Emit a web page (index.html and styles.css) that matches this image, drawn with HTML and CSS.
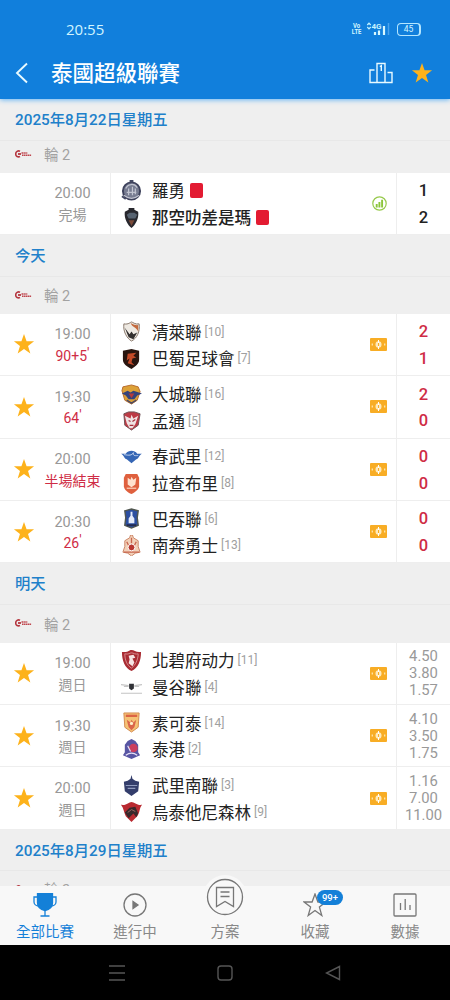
FILE: index.html
```html
<!DOCTYPE html>
<html lang="zh-Hant">
<head>
  <meta charset="UTF-8" />
  <meta name="viewport" content="width=device-width, initial-scale=1.0" />
  <title>泰國超級聯賽</title>
  <link rel="stylesheet" href="styles.css">
</head>
<body>
  <svg class="sprite">
    <symbol id="star" viewBox="0 0 24 24"><path d="M12 1l2.800 8h8.200l-6.600 5.100 2.500 8.300L12 17.400l-6.900 5 2.500-8.300L1 9h8.200z"/></symbol>
    <symbol id="cash" viewBox="0 0 17 13">
      <rect width="17" height="13" rx="1" fill="#f8ad25"/>
      <ellipse cx="8.500" cy="6.500" rx="3" ry="3.300" fill="#ffeabc"/>
      <path d="M8.500 2v9" stroke="#fff" stroke-width="1"/>
      <path d="M8.500 5v3" stroke="#f8ad25" stroke-width="1"/>
      <path d="M2.300 5.500v2M14.700 5.500v2" stroke="#ffe5ac" stroke-width="1.300"/>
    </symbol>
    <symbol id="league" viewBox="0 0 17 8">
      <path d="M5 1.300C3 .3.700 1.500.7 4S3 7.500 5 6.500" fill="none" stroke="#b5363f" stroke-width="1.600"/>
      <path d="M3 4h3" stroke="#b5363f" stroke-width="1.800"/>
      <path d="M6.500 3h6M7 5.200h9.500" stroke="#c0474f" stroke-width="1.500" stroke-dasharray="1.500 .4"/>
    </symbol>
  </svg>

  <div class="header">
    <div class="status">
      <span class="clock">20:55</span>
      <span class="volte">Vo<br>LTE</span>
      <svg class="signal" width="24" height="14" viewBox="0 0 24 14">
        <path d="M1.300 3L3 1.200 4.700 3M1.300 5L3 6.800 4.700 5" fill="none" stroke="#c5f3ff" stroke-width="1.200"/>
        <text x="5.500" y="6.600">4G</text>
        <path d="M9 10v3M13 8.500v4.500M18 4v9" stroke="#d8f8ff" stroke-width="2.200"/>
        <path d="M22.500 1v12" stroke="#4aa2ec" stroke-width="1.500"/>
      </svg>
      <span class="battery">45</span>
    </div>
    <div class="titlebar">
      <svg class="back" width="14" height="22" viewBox="0 0 14 22"><path d="M12 1.500L2 11l10 9.500"/></svg>
      <h1>泰國超級聯賽</h1>
      <svg class="podium" width="24" height="22" viewBox="0 0 24 22"><path d="M8 20.500H1V8h4.500M8 20.500V1.500h8v19zM16 20.500h7V10.500h-4.500M8 20.500h8M10.800 4.500l1.500-.8V9"/></svg>
      <svg class="star" width="22" height="22"><use href="#star"/></svg>
    </div>
  </div>

  <div class="list">
    <h2 class="day">2025年8月22日星期五</h2>
    <div class="round round-first"><svg width="17" height="8"><use href="#league"/></svg>輪 2</div>
    <div class="match">
      <div class="fav"></div>
      <div class="time">20:00<span>完場</span></div>
      <div class="teams">
        <div class="team">
          <svg class="crest" viewBox="0 0 22 22"><circle cx="11" cy="11.500" r="9" fill="#777c91" stroke="#3e425c" stroke-width="2"/><path d="M5 9c2-5 9-6 12-1M6 13h10M8 9v7M12 7v9M15 9v6M3 16c5 4 11 4 16 0" fill="none" stroke="#c1c4d0" stroke-width="1.300"/><path d="M1 17l4 3M9 1h4" stroke="#444963" stroke-width="2"/></svg>
          羅勇<i class="red-card"></i>
        </div>
        <div class="team winner">
          <svg class="crest" viewBox="0 0 22 22"><path d="M8 1h6v2l4 2c1 7-3 14-7 17C7 19 3 12 4 5l4-2z" fill="#27272d"/><path d="M6 8l3-2h5l3 2-2 4H8z" fill="#566270"/><path d="M8 14h6l-3 6z" fill="#7b4a38"/></svg>
          那空叻差是瑪<i class="red-card"></i>
        </div>
      </div>
      <div class="tag"><svg class="stats" width="15" height="15" viewBox="0 0 15 15"><circle cx="7.500" cy="7.500" r="6.700" fill="none" stroke="#96c94a" stroke-width="1.200"/><path d="M4.700 8v3.500M7.400 6v5.500M10.100 3.800v7.700" stroke="#8bc53a" stroke-width="1.900"/></svg></div>
      <div class="score">1<span>2</span></div>
    </div>

    <h2 class="day">今天</h2>
    <div class="round"><svg width="17" height="8"><use href="#league"/></svg>輪 2</div>
    <div class="match live">
      <div class="fav"><svg class="star" width="22" height="22"><use href="#star"/></svg></div>
      <div class="time">19:00<span>90+5<sup>'</sup></span></div>
      <div class="teams">
        <div class="team">
          <svg class="crest" viewBox="0 0 22 22"><path d="M3 3c5 1 7-2 8-2s4 3 8 2c1 8-2 15-8 18C6 18 2 11 3 3z" fill="#eee9e2" stroke="#857568"/><path d="M10 2c4 2 7 3 8 2v7c-2-5-6-4-8-9z" fill="#c36a3e"/><path d="M4 7l5 7 2-3 2 3 4-2-4 7-5-2z" fill="#33302f"/></svg>
          清萊聯<small>[10]</small>
        </div>
        <div class="team">
          <svg class="crest" viewBox="0 0 22 22"><path d="M2 3l9-2 8 2v9c0 5-4 7-8 10-5-3-9-5-9-10z" fill="#29150f"/><path d="M7 6l9-1-3 3 3 2-4 1-1 4 3 3-7-2 2-5-3 2z" fill="#c34a28"/></svg>
          巴蜀足球會<small>[7]</small>
        </div>
      </div>
      <div class="tag"><svg width="17" height="13"><use href="#cash"/></svg></div>
      <div class="score">2<span>1</span></div>
    </div>
    <div class="match live">
      <div class="fav"><svg class="star" width="22" height="22"><use href="#star"/></svg></div>
      <div class="time">19:30<span>64<sup>'</sup></span></div>
      <div class="teams">
        <div class="team">
          <svg class="crest" viewBox="0 0 22 22"><path d="M2 3l9-2 7 2 2 5-3 9-6 4-7-4-3-10z" fill="#dda137" stroke="#b76c30"/><path d="M1 10l6-3 3 2 3-2 9 3-5 2-3 4H8l-3-4z" fill="#35437a"/><path d="M8 10h6l-3 5z" fill="#b63b3b"/><path d="M6 17l5 3 5-3" fill="none" stroke="#4b4a63" stroke-width="1.500"/></svg>
          大城聯<small>[16]</small>
        </div>
        <div class="team">
          <svg class="crest" viewBox="0 0 22 22"><path d="M3 4l5-2h6l6 2-2 12-7 5-7-5z" fill="#bd3b46" stroke="#6d5054"/><path d="M4 6l6 3 1-4 2 4 5-3-3 9-3 4H9l-3-5z" fill="#efe3e3"/><path d="M8 11l2 1M15 10l-3 2M9 16h4" stroke="#a42e3a" stroke-width="1.300"/></svg>
          孟通<small>[5]</small>
        </div>
      </div>
      <div class="tag"><svg width="17" height="13"><use href="#cash"/></svg></div>
      <div class="score">2<span>0</span></div>
    </div>
    <div class="match live">
      <div class="fav"><svg class="star" width="22" height="22"><use href="#star"/></svg></div>
      <div class="time">20:00<span>半場結束</span></div>
      <div class="teams">
        <div class="team">
          <svg class="crest" viewBox="0 0 22 22"><path d="M0 8h5c3-4 9-4 12 0h5c-3 1-3 5-6 6l-5 4-5-4C3 13 3 9 0 8z" fill="#3566b5"/><path d="M3 9c6 1 8 1 10-2-1 4 3 3 5 3" fill="none" stroke="#d2e0f3" stroke-width=".9"/></svg>
          春武里<small>[12]</small>
        </div>
        <div class="team">
          <svg class="crest" viewBox="0 0 22 22"><path d="M5 1h12l2 4v9c0 3-5 7-8 8-4-1-8-5-8-8V5z" fill="#df603e"/><path d="M7 5l3 2 1-3 2 3 3-2-1 7-4 3-4-3z" fill="#ffe1ce"/><path d="M6 16h10" stroke="#f6bda4" stroke-width="1.500"/></svg>
          拉查布里<small>[8]</small>
        </div>
      </div>
      <div class="tag"><svg width="17" height="13"><use href="#cash"/></svg></div>
      <div class="score">0<span>0</span></div>
    </div>
    <div class="match live">
      <div class="fav"><svg class="star" width="22" height="22"><use href="#star"/></svg></div>
      <div class="time">20:30<span>26<sup>'</sup></span></div>
      <div class="teams">
        <div class="team">
          <svg class="crest" viewBox="0 0 22 22"><path d="M4 3l7-2 7 2-1 7 1 8-7 3-7-3 1-8z" fill="#2c4fa1" stroke="#50564f" stroke-width="1.500"/><path d="M10 4h2v4l2 3v5H8v-5l2-3z" fill="#e4ebfa"/><path d="M6 18h10" stroke="#222b54" stroke-width="2"/></svg>
          巴吞聯<small>[6]</small>
        </div>
        <div class="team">
          <svg class="crest" viewBox="0 0 22 22"><path d="M10 0h2l1 3 5 3v6l2 6-5 1-4 3-4-3-5-1 2-6V6l5-3z" fill="#f2d1b9" stroke="#cb8364"/><path d="M11 3v6M6 7l2 4M16 7l-2 4M3 18h16" stroke="#c8654d" stroke-width="1.400"/><circle cx="11" cy="13" r="3.600" fill="#b93831" stroke="#fff"/></svg>
          南奔勇士<small>[13]</small>
        </div>
      </div>
      <div class="tag"><svg width="17" height="13"><use href="#cash"/></svg></div>
      <div class="score">0<span>0</span></div>
    </div>

    <h2 class="day">明天</h2>
    <div class="round"><svg width="17" height="8"><use href="#league"/></svg>輪 2</div>
    <div class="match">
      <div class="fav"><svg class="star" width="22" height="22"><use href="#star"/></svg></div>
      <div class="time">19:00<span>週日</span></div>
      <div class="teams">
        <div class="team">
          <svg class="crest" viewBox="0 0 22 22"><path d="M1 2c7 1 7-2 10-2s5 3 10 2c0 9-3 17-10 20C4 19 1 11 1 2z" fill="#a92c33"/><path d="M4 4c4 1 5-1 7-1s4 2 7 1c0 6-3 12-7 15C6 16 4 10 4 4z" fill="none" stroke="#d88d90"/><path d="M8 6l5-1 2 3-3 1 2 4-2 4-4-3 1-4z" fill="#f5e5e5"/></svg>
          北碧府动力<small>[11]</small>
        </div>
        <div class="team">
          <svg class="crest" viewBox="0 0 22 22"><path d="M0 8l8 1M22 8l-8 1M3 10h5M14 10h5M0 17h22" stroke="#c4c4c4" stroke-width="1.200"/><path d="M8.500 7h5v5L11 14l-2.500-2z" fill="#303136"/></svg>
          曼谷聯<small>[4]</small>
        </div>
      </div>
      <div class="tag"><svg width="17" height="13"><use href="#cash"/></svg></div>
      <div class="odds">4.50<span>3.80</span><span>1.57</span></div>
    </div>
    <div class="match">
      <div class="fav"><svg class="star" width="22" height="22"><use href="#star"/></svg></div>
      <div class="time">19:30<span>週日</span></div>
      <div class="teams">
        <div class="team">
          <svg class="crest" viewBox="0 0 22 22"><path d="M3 1h16l-1 15-7 5-7-5z" fill="#f5c275" stroke="#d3894e"/><path d="M5 4h12" stroke="#dc6444" stroke-width="2.500"/><path d="M6 8l4 3 1-3 2 3 3-3-2 8-3 3-3-3z" fill="#da654a"/><circle cx="11" cy="12" r="1.700" fill="#fff1c9"/></svg>
          素可泰<small>[14]</small>
        </div>
        <div class="team">
          <svg class="crest" viewBox="0 0 22 22"><path d="M7 2l4-2 4 2 3 4v8l2 3-9 4-9-4 2-3V6z" fill="#5855a3"/><circle cx="13" cy="9.500" r="4.500" fill="#cc3e5e"/><path d="M7 7l3 6M5 17c4-3 8-3 12 0" fill="none" stroke="#e6e0f6" stroke-width="1.300"/></svg>
          泰港<small>[2]</small>
        </div>
      </div>
      <div class="tag"><svg width="17" height="13"><use href="#cash"/></svg></div>
      <div class="odds">4.10<span>3.50</span><span>1.75</span></div>
    </div>
    <div class="match">
      <div class="fav"><svg class="star" width="22" height="22"><use href="#star"/></svg></div>
      <div class="time">20:00<span>週日</span></div>
      <div class="teams">
        <div class="team">
          <svg class="crest" viewBox="0 0 22 22"><path d="M11 0l1 4 3 2 4 1-1 10-7 5-7-5L3 7l4-1 3-2z" fill="#333d6b"/><path d="M5 11h12M7 14h8" stroke="#8f9abd" stroke-width="1.200"/></svg>
          武里南聯<small>[3]</small>
        </div>
        <div class="team">
          <svg class="crest" viewBox="0 0 22 22"><path d="M0 4c6 1 8-3 11-3s6 4 11 3c-3 4-2 8-5 12l-6 6-6-6C3 12 3 8 0 4z" fill="#b92a31"/><path d="M4 12l5-5 6-1 3 7-2 4-3-4-5 5z" fill="#39282b"/><path d="M7 12l4-3 4 2" fill="none" stroke="#9a6b66"/></svg>
          烏泰他尼森林<small>[9]</small>
        </div>
      </div>
      <div class="tag"><svg width="17" height="13"><use href="#cash"/></svg></div>
      <div class="odds">1.16<span>7.00</span><span>11.00</span></div>
    </div>

    <h2 class="day day-last">2025年8月29日星期五</h2>
    <div class="round"><svg width="17" height="8"><use href="#league"/></svg>輪 2</div>
  </div>

  <div class="tabbar">
    <a class="tab active">
      <svg width="24" height="24" viewBox="0 0 24 24"><path d="M4.500 0h15v10c0 4-3 6.500-7.500 7.500C7.500 16.500 4.500 14 4.500 10z" fill="#1480d8"/><path d="M4 4H1v5c0 2 2 4 5 4M20 4h3v5c0 2-2 4-5 4M12 17v6M7.500 23h9"/></svg>
      全部比賽
    </a>
    <a class="tab">
      <svg width="24" height="24" viewBox="0 0 24 24"><circle cx="12" cy="12" r="11"/><path d="M10 8.500v7l5-3.500z" fill="#777"/></svg>
      進行中
    </a>
    <a class="tab plan">
      <span class="plan-icon"><svg width="38" height="38" viewBox="0 0 38 38"><circle cx="19" cy="19" r="17.500"/><path d="M10.500 9.500h17v19L19 23.500l-8.500 5zM14.500 14h9M14.500 18.500h9"/></svg></span>
      方案
    </a>
    <a class="tab">
      <span class="fav-tab">
        <svg width="24" height="24" viewBox="0 0 24 24"><path d="M12 1l2.900 8h8l-6.500 5.100 2.400 8.400-6.800-5-6.800 5 2.400-8.400L1.100 9h8z"/></svg>
        <b class="badge">99+</b>
      </span>
      收藏
    </a>
    <a class="tab">
      <svg width="24" height="24" viewBox="0 0 24 24"><rect x="1" y="1" width="22" height="22" rx="1"/><path d="M7.500 10v7M12.200 6v11M17 12v5"/></svg>
      數據
    </a>
  </div>

  <div class="sysbar">
    <svg width="16" height="16" viewBox="0 0 16 16"><path d="M0 1h16M0 8h16M0 15h16"/></svg>
    <svg width="16" height="16" viewBox="0 0 16 16"><rect x="1" y="1" width="14" height="14" rx="3"/></svg>
    <svg width="16" height="16" viewBox="0 0 16 16"><path d="M14.500 1.500v13L1.500 8z"/></svg>
  </div>
</body>
</html>
```

FILE: styles.css
```css
* {
  box-sizing: border-box;
}
body {
  margin: 0;
  width: 450px;
  height: 1000px;
  overflow: hidden;
  display: flex;
  flex-direction: column;
  font-family: Roboto, "Noto Sans CJK TC", sans-serif;
  background: #efefef;
  color: #222;
}
svg {
  display: block;
  flex: none;
}
.sprite {
  position: absolute;
  width: 0;
  height: 0;
}

/* header */
.header {
  flex: none;
  height: 98.5px;
  background: #117fdc;
  color: #fff;
  box-shadow: 0 1px 5px #65b5f5;
  z-index: 1;
}
.status {
  height: 48px;
  padding: 10px 29px 0 66px;
  display: flex;
  align-items: center;
  color: #d3f5ff;
}
.clock {
  flex: 1;
  font-family: "Open Sans", sans-serif;
  font-size: 15px;
}
.volte {
  font-size: 7px;
  font-weight: bold;
  line-height: 6.5px;
  text-align: center;
  transform: scaleX(0.85);
  margin-right: 4px;
}
.signal text {
  font-size: 8px;
  font-weight: bold;
  fill: #c5f3ff;
}
.battery {
  width: 24px;
  height: 13px;
  margin-left: 7px;
  border: 1.5px solid #b4e6ff;
  border-right-width: 2px;
  border-radius: 4px;
  font-size: 8.5px;
  line-height: 11px;
  text-align: center;
}
.titlebar {
  height: 50px;
  padding: 0 17px 0 15px;
  display: flex;
  align-items: center;
}
.back, .podium {
  fill: none;
  stroke: #e8faff;
  stroke-width: 1.9;
}
.podium {
  stroke-width: 1.4;
  margin-right: 18px;
}
.titlebar h1 {
  flex: 1;
  margin: 2px 0 0 22px;
  font-size: 21.5px;
  line-height: 30px;
  font-weight: 500;
}
.star {
  fill: #fdb21b;
}

/* match list */
.list {
  flex: 1;
  min-height: 0;
  overflow: hidden;
}
.day {
  height: 42px;
  margin: 0;
  padding-left: 15px;
  border-bottom: 1px solid #e8e8e8;
  font-size: 15.3px;
  font-weight: 500;
  line-height: 43px;
  color: #2080ca;
}
.day-last {
  height: 41px;
}
.round {
  height: 37.2px;
  padding: 0 0 1px 15px;
  display: flex;
  align-items: center;
  gap: 12px;
  font-size: 14.5px;
  color: #a2a2a2;
}
.round-first {
  height: 32.5px;
  padding-bottom: 6px;
}
.match {
  height: 62.4px;
  display: grid;
  grid-template-columns: 35px 75px 1fr 28px 53px;
  background: #fff;
  border-bottom: 1px solid #eee;
}
.round-first + .match {
  height: 61.6px;
}
.fav {
  display: flex;
  align-items: center;
  padding-left: 13px;
}
.time {
  display: flex;
  flex-direction: column;
  justify-content: center;
  align-items: center;
  padding-top: 3px;
  font-size: 14.5px;
  line-height: 20.5px;
  color: #989898;
}
.time span {
  font-size: 14px;
}
.live .time span {
  color: #cf2c45;
  white-space: nowrap;
}
.time sup {
  font-size: 14px;
  line-height: 0;
  vertical-align: 3px;
}
.teams {
  display: flex;
  flex-direction: column;
  justify-content: center;
  padding: 1px 0 0 10px;
  border-left: 1px solid #eee;
}
.team {
  height: 26.7px;
  display: flex;
  align-items: center;
  font-size: 16.5px;
  white-space: nowrap;
}
.winner {
  font-weight: 500;
}
.crest {
  width: 21px;
  height: 21px;
  margin-right: 10px;
}
.team small {
  margin-left: 3px;
  font-size: 12px;
  color: #a0a0a0;
}
.red-card {
  width: 13px;
  height: 15px;
  margin-left: 5px;
  background: #e31b32;
  border-radius: 2px;
}
.tag {
  display: flex;
  align-items: center;
  padding-left: 1px;
  border-right: 1px solid #eee;
}
.stats {
  margin-left: 2px;
}
.score, .odds {
  display: flex;
  flex-direction: column;
  justify-content: center;
  align-items: center;
  font-size: 16.5px;
  font-weight: 500;
  line-height: 26.7px;
}
.score {
  padding-top: 3px;
}
.live .score {
  color: #cf2c45;
}
.odds {
  padding-top: 1px;
  font-size: 14.8px;
  font-weight: 400;
  line-height: 17px;
  color: #999;
}

/* bottom tabs */
.tabbar {
  flex: none;
  height: 59px;
  display: flex;
  background: #f8f8f8;
  z-index: 1;
}
.tab {
  flex: 1;
  display: flex;
  flex-direction: column;
  align-items: center;
  padding-top: 7px;
  font-size: 14.5px;
  line-height: 31px;
  color: #888;
}
.tab svg {
  fill: none;
  stroke: #777;
  stroke-width: 1.3;
}
.tab.active {
  color: #1480d8;
}
.tab.active svg {
  stroke: #1480d8;
}
.plan {
  padding-top: 0;
}
.plan-icon {
  height: 44px;
  margin-top: -11px;
  margin-bottom: -2px;
  padding: 3px;
  border-radius: 50%;
  background: #f8f8f8;
}
.fav-tab {
  position: relative;
}
.badge {
  position: absolute;
  left: 14px;
  top: -3px;
  width: 26px;
  height: 15px;
  border-radius: 8px;
  background: #1480d8;
  color: #fff;
  font-size: 9.5px;
  font-weight: 500;
  line-height: 15px;
  text-align: center;
}

/* android navigation */
.sysbar {
  flex: none;
  height: 55px;
  padding: 0 109px;
  display: flex;
  align-items: center;
  justify-content: space-between;
  background: #000;
}
.sysbar svg {
  fill: none;
  stroke: #555;
  stroke-width: 1.4;
}
```
